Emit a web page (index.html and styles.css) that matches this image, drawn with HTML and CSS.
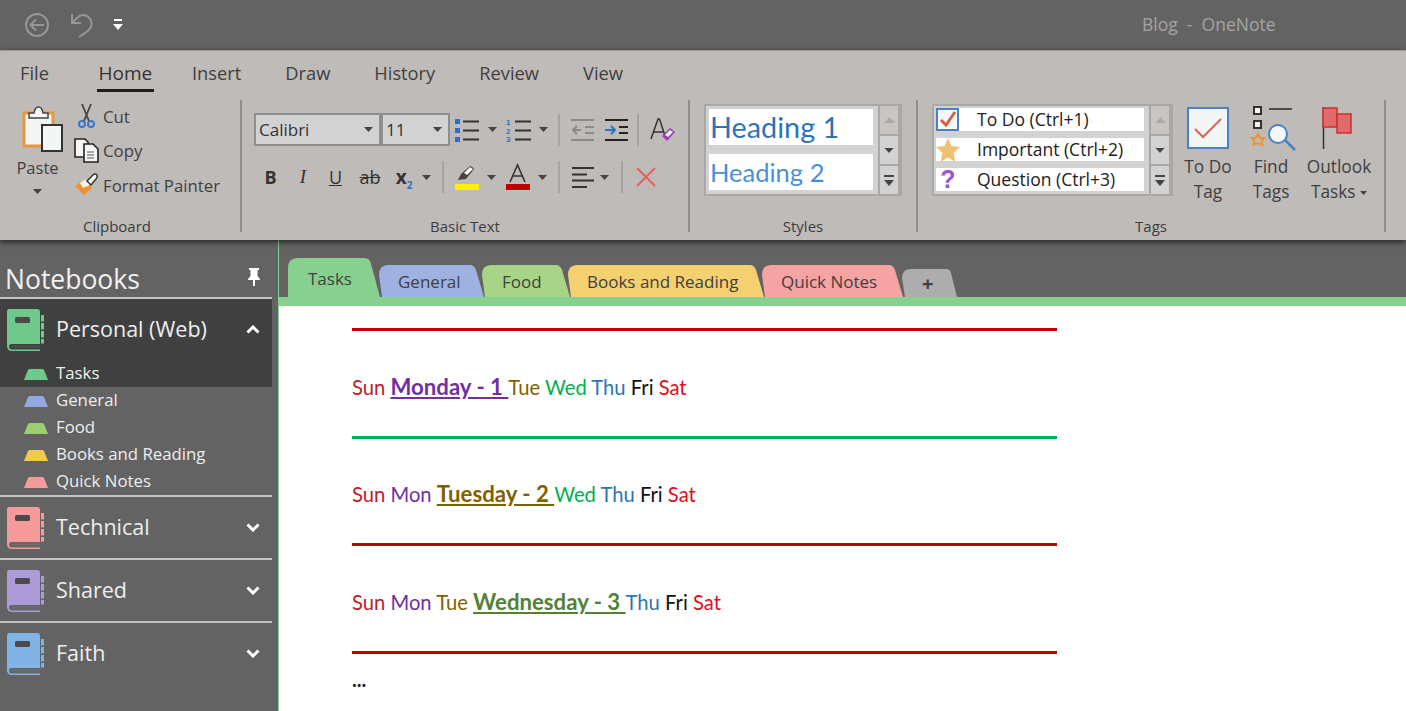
FILE: index.html
```html
<!DOCTYPE html>
<html lang="en">
<head>
<meta charset="utf-8">
<title>Blog - OneNote</title>
<link rel="stylesheet" href="styles.css">
</head>
<body>
<svg class="defs" width="0" height="0" aria-hidden="true">
  <symbol id="book" viewBox="0 0 38 42">
    <path fill="currentColor" d="M3 0H31Q34 0 34 3V35H6Q3 35 3 37H1V3Q1 0 3 0Z"/>
    <path fill="currentColor" d="M1 37Q1 42 6 42H34V40.500H6Q3 40.500 3 37Z"/>
    <path fill="currentColor" d="M5 36.500H34V38.500H5Z" opacity=".15"/>
    <rect x="9" y="8" width="15" height="6" rx="1.500" fill="#4a4a4a"/>
    <path fill="currentColor" d="M35 6h3v6.500h-3zM35 14h3v6.500h-3zM35 22h3v6.500h-3zM35 30h3v4.500h-3z"/>
  </symbol>
  <symbol id="section" viewBox="0 0 24 11">
    <path fill="currentColor" d="M0 11 4 1Q4.500 0 6 0H18Q19.500 0 20 1L24 11Z"/>
  </symbol>
  <symbol id="down" viewBox="0 0 9 5"><path fill="#444" d="M0 0H9L4.500 5Z"/></symbol>
  <symbol id="chev-d" viewBox="0 0 14 9"><path fill="none" stroke="#fff" stroke-width="3" d="M1.500 1.500 7 7 12.500 1.500"/></symbol>
  <symbol id="chev-u" viewBox="0 0 14 9"><path fill="none" stroke="#fff" stroke-width="3" d="M1.500 7.500 7 2 12.500 7.500"/></symbol>
</svg>

<header class="titlebar">
  <svg class="qa-back" width="26" height="26" viewBox="0 0 26 26"><circle cx="13" cy="13" r="11" fill="none" stroke="#969696" stroke-width="2"/><path fill="none" stroke="#969696" stroke-width="2" d="M20 13H7M12 7.500 6.500 13 12 18.500"/></svg>
  <svg class="qa-undo" width="24" height="26" viewBox="0 0 24 26"><path fill="none" stroke="#969696" stroke-width="2" d="M2 2V11H11M2 11 8 5Q12 1.500 17 4 23 8 21 15 19 19 9 25"/></svg>
  <svg class="qa-more" width="10" height="12" viewBox="0 0 10 12"><path fill="#fff" d="M1 0H9V2H1ZM0 5H10L5 11Z"/></svg>
  <div class="app-title">Blog&nbsp; -&nbsp; OneNote</div>
</header>

<section class="ribbon">
  <nav class="ribbon-tabs">
    <span class="rtab">File</span>
    <span class="rtab rtab-on">Home</span>
    <span class="rtab">Insert</span>
    <span class="rtab">Draw</span>
    <span class="rtab">History</span>
    <span class="rtab">Review</span>
    <span class="rtab">View</span>
  </nav>
  <div class="groups">
    <div class="group g-clip">
      <div class="clip-body">
        <div class="paste">
          <svg width="46" height="46" viewBox="0 0 46 46"><rect x="9" y="7" width="29" height="33" fill="#f2f6f5" stroke="#e8963c" stroke-width="3"/><path fill="#f6f6f6" stroke="#444" stroke-width="1.500" d="M14 12V7H19Q20 1 23.500 1 27 1 28 7H33V12Z"/><rect x="27" y="19" width="20" height="26" fill="#f2f6f5" stroke="#333" stroke-width="2"/></svg>
          <span class="paste-label">Paste</span>
          <svg class="arrow" width="9" height="5"><use href="#down"/></svg>
        </div>
        <div class="clip-list">
          <div class="clip-row"><svg class="clip-ic" width="24" height="26" viewBox="0 0 24 26"><path fill="none" stroke="#444" stroke-width="1.800" d="M8 1 15 18M17 1 10 18"/><circle cx="8" cy="21" r="3" fill="none" stroke="#3c78c8" stroke-width="2"/><circle cx="17" cy="21" r="3" fill="none" stroke="#3c78c8" stroke-width="2"/></svg>Cut</div>
          <div class="clip-row"><svg class="clip-ic" width="24" height="26" viewBox="0 0 24 26"><path fill="#f6f6f6" stroke="#222" stroke-width="1.600" d="M1 1H11L14 4V19H1Z"/><path fill="#f6f6f6" stroke="#222" stroke-width="1.600" d="M10 6H19L24 11V24H10Z"/><path fill="none" stroke="#555" stroke-width="1.200" d="M13 14H20M13 17H20M13 20H20"/></svg>Copy</div>
          <div class="clip-row"><svg class="clip-ic" width="24" height="24" viewBox="0 0 24 24"><path fill="#ee8f35" d="M1 13 12 6 18 15 10 22Z"/><path fill="#f7f3ea" d="M6 10 12 6 16 12 9 15Z"/><path fill="#f6f6f6" stroke="#333" stroke-width="1.500" d="M13 8 19 2Q21 0 23 2 24 4 22 6L17 12Z"/></svg>Format Painter</div>
        </div>
      </div>
      <div class="group-label">Clipboard</div>
    </div>

    <div class="group g-text">
      <div class="tool-row row-one">
        <div class="combo combo-font"><span>Calibri</span><svg width="9" height="5"><use href="#down"/></svg></div>
        <div class="combo combo-size"><span>11</span><svg width="9" height="5"><use href="#down"/></svg></div>
        <svg class="ml5" width="24" height="24" viewBox="0 0 24 24"><path fill="#2f6fc9" d="M0 1h5v5H0zM0 10h5v5H0zM0 19h5v5H0z"/><path stroke="#333" stroke-width="2" d="M8 3.500H24M8 12.500H24M8 21.500H24"/></svg>
        <svg class="arrow ml9" width="9" height="5"><use href="#down"/></svg>
        <svg class="ml9" width="25" height="24" viewBox="0 0 25 24"><text x="0" y="7" class="mini">1</text><text x="0" y="15.500" class="mini">2</text><text x="0" y="24" class="mini">3</text><path stroke="#333" stroke-width="2" d="M9 3.500H25M9 12.500H25M9 21.500H25"/></svg>
        <svg class="arrow ml8" width="9" height="5"><use href="#down"/></svg>
        <i class="sep ml10"></i>
        <svg class="ml11" width="23" height="22" viewBox="0 0 23 22"><path stroke="#8a8a8a" stroke-width="2" fill="none" d="M0 1H23M14 8H23M14 14H23M0 21H23M10 11H2M6 7 2 11 6 15"/></svg>
        <svg class="ml11" width="23" height="22" viewBox="0 0 23 22"><path stroke="#222" stroke-width="2" d="M0 1H23M14 8H23M14 14H23M0 21H23"/><path stroke="#2f6fc9" stroke-width="2" fill="none" d="M0 11H10M6 7 10 11 6 15"/></svg>
        <i class="sep ml9"></i>
        <svg class="ml11" width="25" height="26" viewBox="0 0 25 26"><path fill="none" stroke="#333" stroke-width="1.500" d="M1 22 8 2H9.500L16 22M4 15H13"/><path fill="#9c3fae" d="M12 19 20 11 25 15 17 24Z"/><path fill="#f2f2f2" d="M15 18 20 13 23 15 18 20Z"/></svg>
      </div>
      <div class="tool-row row-two">
        <span class="fmt fmt-b">B</span>
        <span class="fmt fmt-i">I</span>
        <span class="fmt fmt-u">U</span>
        <span class="fmt fmt-s">ab</span>
        <span class="fmt fmt-x">x<sub>2</sub></span>
        <svg class="arrow ml2" width="9" height="5"><use href="#down"/></svg>
        <i class="sep ml11"></i>
        <svg class="ml11" width="24" height="26" viewBox="0 0 24 26"><path fill="#444" d="M3 16 6 10 15 2Q17 2 19 5L11 15Z"/><path fill="#f4f4f4" d="M9 9 15 3 18 5 12 11Z"/><rect y="20" width="24" height="6" fill="#fff000"/></svg>
        <svg class="arrow ml8" width="9" height="5"><use href="#down"/></svg>
        <svg class="ml10" width="24" height="26" viewBox="0 0 24 26"><path fill="none" stroke="#333" stroke-width="1.600" d="M4 18 11.500 1 19 18M7 12H16"/><rect y="20" width="24" height="6" fill="#c00000"/></svg>
        <svg class="arrow ml8" width="9" height="5"><use href="#down"/></svg>
        <i class="sep ml11"></i>
        <svg class="ml12" width="22" height="21" viewBox="0 0 22 21"><path stroke="#333" stroke-width="2" d="M0 1H22M0 7.500H15M0 13.500H22M0 20H15"/></svg>
        <svg class="arrow ml6" width="9" height="5"><use href="#down"/></svg>
        <i class="sep ml12"></i>
        <svg class="ml13" width="20" height="20" viewBox="0 0 20 20"><path stroke="#e0625e" stroke-width="2" d="M1 1 19 19M19 1 1 19"/></svg>
      </div>
      <div class="group-label">Basic Text</div>
    </div>

    <div class="group g-styles">
      <div class="gallery style-gallery">
        <div class="gallery-items style-items">
          <div class="style-item h-one">Heading 1</div>
          <div class="style-item h-two">Heading 2</div>
        </div>
        <div class="scroller">
          <div class="scroll-btn sb-up"><svg width="11" height="6" viewBox="0 0 9 5"><path fill="#aaa" d="M0 5H9L4.500 0Z"/></svg></div>
          <div class="scroll-btn sb-down"><svg width="10" height="5"><use href="#down"/></svg></div>
          <div class="scroll-btn sb-more"><svg width="10" height="11" viewBox="0 0 10 11"><path fill="#444" d="M0 0H10V2H0ZM0 5H10L5 11Z"/></svg></div>
        </div>
      </div>
      <div class="group-label">Styles</div>
    </div>

    <div class="group g-tags">
      <div class="tags-body">
        <div class="gallery tag-gallery">
          <div class="gallery-items tag-items">
            <div class="tag-item"><svg class="tag-ic" width="24" height="24" viewBox="0 0 24 24"><rect x="1" y="1" width="21" height="21" fill="#f5f8f8" stroke="#4a80c4" stroke-width="2"/><path fill="none" stroke="#dc5a46" stroke-width="3" d="M5 12 10 17 19 4"/></svg>To Do (Ctrl+1)</div>
            <div class="tag-item"><svg class="tag-ic" width="24" height="24" viewBox="0 0 24 24"><path fill="#f0c173" d="M12 0 15.500 8 24 9 17.500 15 19.500 24 12 19.500 4.500 24 6.500 15 0 9 8.500 8Z"/></svg>Important (Ctrl+2)</div>
            <div class="tag-item"><span class="tag-q">?</span>Question (Ctrl+3)</div>
          </div>
          <div class="scroller">
            <div class="scroll-btn sb-up"><svg width="11" height="6" viewBox="0 0 9 5"><path fill="#aaa" d="M0 5H9L4.500 0Z"/></svg></div>
            <div class="scroll-btn sb-down"><svg width="10" height="5"><use href="#down"/></svg></div>
            <div class="scroll-btn sb-more"><svg width="10" height="11" viewBox="0 0 10 11"><path fill="#444" d="M0 0H10V2H0ZM0 5H10L5 11Z"/></svg></div>
          </div>
        </div>
        <div class="big big-todo">
          <svg width="42" height="42" viewBox="0 0 42 42"><rect x="1" y="1" width="40" height="40" fill="#f2f6f5" stroke="#4a80c4" stroke-width="2"/><path fill="none" stroke="#e0625e" stroke-width="2" d="M8 22 16 30 34 12"/></svg>
          <span>To Do<br>Tag</span>
        </div>
        <div class="big big-find">
          <svg width="44" height="46" viewBox="0 0 44 46"><rect x="2" y="2" width="7" height="7" fill="#f4f4f4" stroke="#333" stroke-width="2"/><rect x="2" y="16" width="7" height="7" fill="#f4f4f4" stroke="#333" stroke-width="2"/><path stroke="#333" stroke-width="1.600" d="M17 4H40"/><path fill="none" stroke="#e8963c" stroke-width="2" d="M6 29 8 33 12 33 9.500 36 10.500 40 6 38 1.500 40 2.500 36 0 33 4 33Z"/><circle cx="26" cy="29" r="9" fill="#f4f8fa" stroke="#4a80c4" stroke-width="2"/><path stroke="#4a80c4" stroke-width="2.500" d="M33 35 43 45"/></svg>
          <span>Find<br>Tags</span>
        </div>
        <div class="big big-outlook">
          <svg class="flag" width="30" height="42" viewBox="0 0 30 42"><path stroke="#333" stroke-width="1.500" d="M1.500 0V42"/><path fill="#e26a6a" stroke="#c8322c" stroke-width="1.500" d="M1 1H15V20H1Z"/><path fill="#e26a6a" stroke="#c8322c" stroke-width="1.500" d="M15 7H29V26H15Z"/></svg>
          <span>Outlook<br>Tasks <svg class="small-arrow" width="7" height="4"><use href="#down"/></svg></span>
        </div>
      </div>
      <div class="group-label">Tags</div>
    </div>
  </div>
</section>

<div class="workspace">
  <aside class="sidebar">
    <div class="side-head">
      <span class="side-title">Notebooks</span>
      <svg class="pin" width="14" height="18" viewBox="0 0 14 18"><path fill="#fff" d="M2 0H12V2H10.500V8L13 11V12H8V18H6V12H1V11L3.500 8V2H2Z"/></svg>
    </div>
    <div class="nb-current">
      <div class="nb-row">
        <svg class="nb-book c-green" width="38" height="42"><use href="#book"/></svg>
        <span class="nb-name">Personal (Web)</span>
        <svg class="nb-chev" width="14" height="9"><use href="#chev-u"/></svg>
      </div>
      <div class="sec-row"><svg class="sec-ic c-green" width="24" height="11"><use href="#section"/></svg>Tasks</div>
    </div>
    <div class="sec-row"><svg class="sec-ic c-blue" width="24" height="11"><use href="#section"/></svg>General</div>
    <div class="sec-row"><svg class="sec-ic c-lime" width="24" height="11"><use href="#section"/></svg>Food</div>
    <div class="sec-row"><svg class="sec-ic c-yellow" width="24" height="11"><use href="#section"/></svg>Books and Reading</div>
    <div class="sec-row"><svg class="sec-ic c-pink" width="24" height="11"><use href="#section"/></svg>Quick Notes</div>
    <div class="nb-row nb-line">
      <svg class="nb-book c-pink" width="38" height="42"><use href="#book"/></svg>
      <span class="nb-name">Technical</span>
      <svg class="nb-chev" width="14" height="9"><use href="#chev-d"/></svg>
    </div>
    <div class="nb-row nb-line">
      <svg class="nb-book c-purple" width="38" height="42"><use href="#book"/></svg>
      <span class="nb-name">Shared</span>
      <svg class="nb-chev" width="14" height="9"><use href="#chev-d"/></svg>
    </div>
    <div class="nb-row nb-line">
      <svg class="nb-book c-sky" width="38" height="42"><use href="#book"/></svg>
      <span class="nb-name">Faith</span>
      <svg class="nb-chev" width="14" height="9"><use href="#chev-d"/></svg>
    </div>
  </aside>

  <main class="main">
    <div class="tabstrip">
      <div class="tab tab-tasks"><svg class="tab-shape" width="92" height="39" viewBox="0 0 92 39"><path fill="#88d090" d="M0 39V10Q0 0 10 0H76Q82 0 83 6L92 39Z"/></svg><span>Tasks</span></div>
      <div class="tab tab-general"><svg class="tab-shape" width="105" height="32" viewBox="0 0 105 32"><path fill="#9fb1e0" d="M3 32 0 10Q0 0 9 0H91Q95 0 97 5L105 32Z"/></svg><span>General</span></div>
      <div class="tab tab-food"><svg class="tab-shape" width="88" height="32" viewBox="0 0 88 32"><path fill="#a8d585" d="M3 32 0 10Q0 0 9 0H74Q78 0 80 5L88 32Z"/></svg><span>Food</span></div>
      <div class="tab tab-books"><svg class="tab-shape" width="196" height="32" viewBox="0 0 196 32"><path fill="#f4d070" d="M3 32 0 10Q0 0 9 0H182Q186 0 188 5L196 32Z"/></svg><span>Books and Reading</span></div>
      <div class="tab tab-quick"><svg class="tab-shape" width="141" height="32" viewBox="0 0 141 32"><path fill="#f5a3a3" d="M3 32 0 10Q0 0 9 0H127Q131 0 133 5L141 32Z"/></svg><span>Quick Notes</span></div>
      <div class="tab tab-add"><svg class="tab-shape" width="55" height="28" viewBox="0 0 55 28"><path fill="#adadad" d="M3 28 0 9Q0 0 9 0H44Q48 0 49 4L55 28Z"/></svg><span>+</span></div>
    </div>
    <div class="strip"></div>
    <article class="page">
      <hr class="rule rule-red">
      <p class="day"><span class="c-sun">Sun</span> <u class="now c-mon">Monday - 1 </u><span class="c-tue">Tue</span> <span class="c-wed">Wed</span> <span class="c-thu">Thu</span> <span class="c-fri">Fri</span> <span class="c-sat">Sat</span></p>
      <hr class="rule rule-green">
      <p class="day"><span class="c-sun">Sun</span> <span class="c-mon">Mon</span> <u class="now c-tue">Tuesday - 2 </u><span class="c-wed">Wed</span> <span class="c-thu">Thu</span> <span class="c-fri">Fri</span> <span class="c-sat">Sat</span></p>
      <hr class="rule rule-red">
      <p class="day"><span class="c-sun">Sun</span> <span class="c-mon">Mon</span> <span class="c-tue">Tue</span> <u class="now c-wedn">Wednesday - 3 </u><span class="c-thu">Thu</span> <span class="c-fri">Fri</span> <span class="c-sat">Sat</span></p>
      <hr class="rule rule-red">
      <p class="more">...</p>
    </article>
  </main>
</div>
</body>
</html>
```
FILE: styles.css
```css
* { box-sizing: border-box; }
html, body { margin: 0; height: 100%; }
body {
  width: 1406px;
  height: 711px;
  overflow: hidden;
  background: #636363;
  font-family: "Open Sans", "Noto Sans", sans-serif;
  color: #404040;
  display: flex;
  flex-direction: column;
}
.defs { position: absolute; }
svg { display: block; flex: none; overflow: visible; }

/* Title bar */
.titlebar { height: 50px; flex: none; display: flex; align-items: center; background: #636363; padding-left: 24px; }
.qa-undo { margin-left: 20px; }
.qa-more { margin-left: 19px; }
.app-title { margin: 0 0 3px 1019px; font-size: 17.500px; color: #a4a4a4; }

/* Ribbon */
.ribbon { height: 190px; flex: none; background: #bfbbb8; position: relative; z-index: 2; box-shadow: 0 2px 6px rgba(0,0,0,.65); border-top: 1px solid #999; }
.ribbon-tabs { height: 49px; display: flex; align-items: flex-start; padding: 9px 0 0 20px; gap: 44px; }
.rtab { font-size: 18.300px; line-height: 26px; height: 32px; color: #404040; }
.rtab-on { border-bottom: 3px solid #1e1e1e; color: #333; width: 57px; text-align: center; margin: 0 -6px 0 4px; font-size: 19px; }
.groups { display: flex; height: 132px; }
.group { position: relative; height: 132px; border-right: 2px solid #8f8f8f; display: flex; flex-direction: column; flex: none; }
.group-label { margin-top: auto; margin-bottom: -4px; height: 20px; line-height: 20px; text-align: center; font-size: 15px; color: #3c3c3c; }

.g-clip { width: 242px; padding-left: 14px; }
.g-clip .group-label { margin-left: -14px; padding-right: 6px; }
.clip-body { display: flex; margin-top: -1px; }
.paste { width: 47px; display: flex; flex-direction: column; align-items: center; padding-top: 7px; }
.paste-label { font-size: 16.500px; line-height: 24px; margin-top: 4px; }
.paste .arrow { margin-top: 9px; }
.clip-list { margin-left: 13px; }
.clip-row { height: 34.500px; display: flex; align-items: center; font-size: 16.800px; }
.clip-ic { margin-right: 5px; }

.g-text { width: 448px; padding: 13px 0 0 12px; }
.g-text .group-label { margin-left: -12px; }
.tool-row { display: flex; align-items: center; }
.row-one { height: 33px; }
.row-two { height: 34px; margin-top: 14px; }
.combo { height: 33px; border: 2px solid #8e8e8e; background: #d2d2d2; display: flex; align-items: center; justify-content: space-between; padding: 0 6px 0 3px; font-size: 17px; }
.combo span { color: #333; }
.combo-font { width: 127px; }
.combo-size { width: 69px; }
.mini { font-size: 8px; font-weight: 700; fill: #2f6fc9; font-family: "Liberation Sans", sans-serif; }
.sep { display: block; width: 2px; height: 32px; background: #a6a3a0; flex: none; }
.ml2 { margin-left: 2px; } .ml5 { margin-left: 5px; } .ml6 { margin-left: 6px; } .ml8 { margin-left: 8px; } .ml9 { margin-left: 9px; } .ml10 { margin-left: 10px; } .ml11 { margin-left: 11px; } .ml12 { margin-left: 12px; } .ml13 { margin-left: 13px; }
.fmt { text-align: center; font-size: 19px; line-height: 34px; color: #333; flex: none; }
.fmt-b { width: 33px; font-weight: 700; font-size: 18px; }
.fmt-i { width: 32px; font-style: italic; font-family: "Liberation Serif", serif; }
.fmt-u { width: 33px; text-decoration: underline; font-size: 18px; }
.fmt-s { width: 36px; text-decoration: line-through; font-size: 18px; }
.fmt-x { width: 32px; font-weight: 700; font-size: 19px; }
.fmt-x sub { font-size: 10px; color: #2f6fc9; line-height: 0; }

.g-styles { width: 228px; padding: 4px 0 0 14px; }
.g-styles .group-label, .g-tags .group-label { margin-left: -14px; }
.gallery { display: flex; background: #d2d2d2; border: 2px solid #a8a8a8; height: 92px; }
.style-gallery { width: 198px; }
.style-items { width: 174px; padding: 3px 0 0 3px; }
.style-item { width: 164px; height: 36px; background: #fff; padding-left: 1px; font-family: Lato, sans-serif; }
.h-one { font-size: 28.800px; line-height: 36px; color: #2e74b5; margin-bottom: 9px; }
.h-two { font-size: 25.500px; line-height: 36px; color: #4a90d9; }
.scroller { width: 22px; margin-left: auto; display: flex; flex-direction: column; flex: none; border-left: 2px solid #a8a8a8; margin-top: -2px; margin-bottom: -2px; }
.scroll-btn { flex: 1; display: flex; align-items: center; justify-content: center; background: #cecece; border-bottom: 2px solid #a8a8a8; border-right: 2px solid #a8a8a8; }
.sb-up { background: #c8c5c3; border-top: 2px solid #a8a8a8; }
.sb-down { background: #d2d2d2; }
.sb-more { background: #d2d2d2; }

.g-tags { width: 468px; padding: 4px 0 0 14px; }
.tags-body { display: flex; }
.tag-gallery { width: 241px; }
.tag-items { width: 213px; padding: 2px 0 0 2px; display: flex; flex-direction: column; gap: 7px; }
.tag-item { height: 23px; background: #fff; display: flex; align-items: center; font-size: 17.500px; color: #222; line-height: 23px; width: 208px; }
.tag-ic { margin-right: 17px; }
.tag-q { width: 24px; margin-right: 17px; text-align: center; font-size: 25px; font-weight: 700; color: #9b59c6; font-family: "Liberation Sans", sans-serif; }
.big { display: flex; flex-direction: column; align-items: center; text-align: center; font-size: 17.300px; line-height: 24.500px; color: #404040; padding-top: 1px; flex: none; }
.big > svg { height: 46px; }
.big span { margin-top: 4px; }
.small-arrow { display: inline-block; vertical-align: middle; }
.big-todo { width: 56px; margin-left: 7px; }
.big-find { width: 54px; margin-left: 8px; }
.big-find > svg { margin-left: 6px; }
.big-outlook { width: 70px; margin-left: 6px; }
.flag { margin-right: 4px; }

/* Workspace */
.workspace { flex: 1; display: flex; min-height: 0; }
.sidebar { width: 279px; flex: none; background: #636363; border-right: 1px solid #88d090; padding-right: 6px; color: #f2f2f2; }
.side-head { height: 59px; display: flex; align-items: flex-end; justify-content: space-between; border-bottom: 2px solid #c4c4c4; padding: 0 11px 0 5px; }
.side-title { font-size: 26.500px; line-height: 36px; color: #f0f0f0; }
.pin { margin-bottom: 11px; }
.nb-current { background: #404040; }
.nb-row { height: 61px; display: flex; align-items: center; padding: 0 12px 0 6px; }
.nb-line { height: 63px; border-top: 2px solid #c4c4c4; }
.nb-name { font-size: 21.500px; line-height: 28px; margin: 0 0 2px 12px; color: #eee; }
.nb-chev { margin-left: auto; }
.sec-row { height: 27px; display: flex; align-items: center; font-size: 16.800px; line-height: 25px; padding: 0 0 2px 24px; color: #eee; }
.sec-ic { margin: 3px 8px 0 0; }
.c-green { color: #6fc98a; }
.c-blue { color: #93a8e0; }
.c-lime { color: #9bd072; }
.c-yellow { color: #f2c94f; }
.c-pink { color: #f59a9a; }
.c-purple { color: #ab9bd9; }
.c-sky { color: #80b4e6; }

/* Main */
.main { flex: 1; display: flex; flex-direction: column; min-width: 0; }
.tabstrip { height: 57px; flex: none; display: flex; align-items: flex-end; padding-left: 9px; }
.tab { position: relative; height: 32px; flex: none; font-size: 17px; color: #404040; display: flex; align-items: center; }
.tab span { position: relative; }
.tab-shape { position: absolute; left: 0; top: 0; }
.tab-tasks { width: 91px; height: 39px; padding: 2px 0 0 20px; }
.tab-general { width: 103px; padding-left: 19px; }
.tab-food { width: 86px; padding-left: 20px; }
.tab-books { width: 194px; padding-left: 19px; }
.tab-quick { width: 140px; padding-left: 19px; }
.tab-add { width: 55px; height: 28px; padding-left: 20px; font-weight: 700; font-size: 20px; }
.strip { height: 9px; flex: none; background: #88d090; }
.page { flex: 1; background: #fff; padding: 22px 0 0 73px; font-family: Lato, sans-serif; font-size: 20.200px; color: #222; overflow: hidden; }
.rule { width: 705px; height: 3px; margin: 0; border: none; }
.rule-red { background: #c00000; }
.rule-green { background: #00b050; }
.day { margin: 43.500px 0 37.200px; height: 24px; line-height: 24px; white-space: nowrap; }
.now { font-weight: 700; font-size: 22.200px; }
.c-sun { color: #c0202a; }
.c-mon { color: #7030a0; }
.c-tue { color: #7f6000; }
.c-wed { color: #00b050; }
.c-wedn { color: #538135; }
.c-thu { color: #2e74b5; }
.c-fri { color: #111; }
.c-sat { color: #e0101c; }
.more { margin: 13px 0 0; line-height: 24px; font-weight: 700; }
```
